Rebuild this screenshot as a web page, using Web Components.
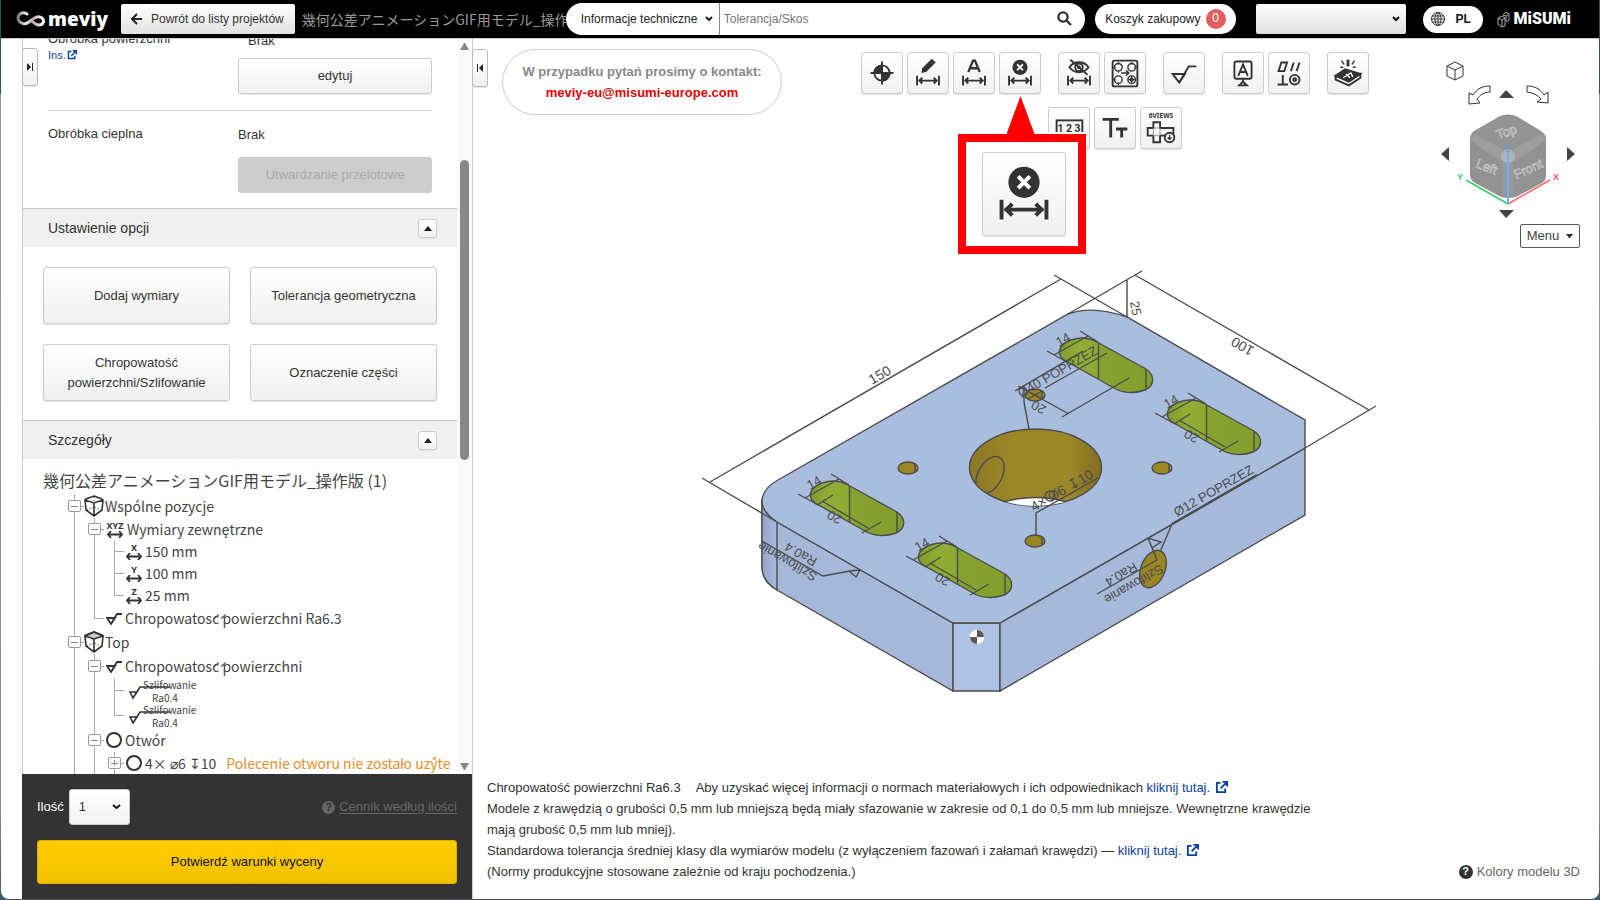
<!DOCTYPE html>
<html lang="pl">
<head>
<meta charset="utf-8">
<title>meviy</title>
<style>
html,body{height:100%}
body{margin:0;box-sizing:border-box;padding:0 1px 1px;background:linear-gradient(#2d5360 94px,#9a9a9e 94px,#8b8b95 90%,#3f5a66);font:13px/20px "Liberation Sans","Noto Sans CJK JP",sans-serif;color:#333;overflow:hidden}
</style>
</head>
<body>
<meviy-app></meviy-app>
<script>
const base = `*{box-sizing:border-box}button,input,select{font:inherit;color:inherit;margin:0}
.btn{border:1px solid #ccc;border-radius:3px;background:linear-gradient(#fff,#f0f0f0);box-shadow:0 1px 1px #e4e4e4;padding:0;cursor:pointer}a{color:#0b3fa8;text-decoration:none}svg{display:block;flex:none}`;
function define(name, css, html) {
  const t = document.createElement('template');
  t.innerHTML = `<style>${base}${css}</style>${html}`;
  customElements.define(name, class extends HTMLElement {
    constructor() { super(); this.attachShadow({mode: 'open'}).append(t.content.cloneNode(true)); }
  });
}
const arrows = (y) => `<path d="M9.5 ${y-5}v10M32.5 ${y-5}v10M11 ${y}h20M15 ${y-3}l-3 3 3 3M27 ${y-3}l3 3-3 3" fill="none" stroke="#333" stroke-width="2"/>`;
const deleteIcon = `<svg viewBox="0 0 42 42"><circle cx="21" cy="15" r="8" fill="#333"/><path d="M18 12l6 6M24 12l-6 6" stroke="#fff" stroke-width="2"/>${arrows(29)}</svg>`;
const ext = (s) => `<svg width="${s}" height="${s}" viewBox="0 0 14 14" fill="none" stroke="#0b3fa8" stroke-width="2"><path d="M6 2H2v10h9V8M8 1h5v5M13 1L6 8"/></svg>`;

/* ---------- header ---------- */
define('meviy-logo', `:host{display:flex;align-items:center;gap:2px;width:91px;flex:none;color:#fff;font:800 19px/36px "Open Sans",sans-serif}`,
`<svg width="30" height="16" viewBox="0 0 30 16" fill="none" stroke-linecap="round"><defs><linearGradient id="m"><stop stop-color="#777"/><stop offset=".3" stop-color="#eee"/><stop offset=".6" stop-color="#b8aeb4"/><stop offset="1" stop-color="#fff"/></linearGradient></defs><path d="M11 3C7 0 2 3 2 7s6 8 11 4 9-7 13-4c3 3 1 7-3 7-2 0-4-1-6-3" stroke="url(#m)" stroke-width="3"/></svg><span>meviy</span>`);
define('misumi-logo', `:host{display:flex;align-items:center;gap:4px;color:#fff;font:900 16px/36px Roboto,sans-serif}`,
`<svg width="13" height="17" viewBox="0 0 13 17" fill="none" stroke="#aaa"><path d="M1 7l4-2 3 2v8l-3 1-4-3zM1 7l4 2 3-2M5 9v7M6 4l3-3 3 2v6l-3 2M6 4l3 1 3-2M9 5v5"/></svg><span>MiSUMi</span>`);
define('app-header', `:host{display:flex;align-items:center;height:38px;background:#000;padding:0 28px 0 15px;font-size:12px}
.back{display:flex;align-items:center;gap:9px;height:30px;margin-left:14px;padding:0 11px 0 10px;white-space:nowrap;border:0;border-radius:2px;background:linear-gradient(#fff,#e2e2e2);box-shadow:none;color:#333}
.name{font:14px/20px "Noto Sans CJK JP",sans-serif;color:#999;width:264px;margin-left:7px;padding-bottom:1px;overflow:hidden;white-space:nowrap;flex:none}
form{display:flex;height:32px;flex:1 1 520px;min-width:300px;background:#fff;border-radius:16px;overflow:hidden}
form>*{border:0;background:transparent}
.sel{position:relative;display:flex;flex:none}
select{appearance:none;border:0;background:transparent;outline:0;width:100%}
.sel svg{position:absolute;right:6px;top:calc(50% - 4px);pointer-events:none}
.kind{width:154px;border-right:1px solid #888}.kind select{padding:0 0 0 15px;color:#222}
input{flex:1;min-width:0;padding:0 4px;outline:0}input::placeholder{color:#757575;opacity:1}
.find{width:42px;padding:0 0 2px;display:grid;place-items:center}
.cart{display:flex;align-items:center;gap:5px;height:30px;margin-left:10px;padding:0 10px;border:0;border-radius:15px;background:#fff;white-space:nowrap;color:#222}
.cart b{width:20px;height:20px;border-radius:10px;background:#e05e5e;color:#fff;font-weight:400;line-height:19px}
.user{width:150px;height:30px;margin-left:20px;border-radius:2px;background:linear-gradient(#fff,#dedede)}
.lang{display:flex;align-items:center;gap:11px;height:27px;width:60px;flex:none;margin:0 14px 0 17px;padding:0 8px;border:0;border-radius:14px;background:#fff;color:#111;font-weight:700}`,
`<meviy-logo></meviy-logo>
<button class="btn back"><svg width="11" height="12" viewBox="0 0 11 12" fill="none" stroke="#222" stroke-width="2"><path d="M11 6H2M6 1L1 6l5 5"/></svg>Powrót do listy projektów</button>
<div class="name">幾何公差アニメーションGIF用モデル_操作版</div>
<form><div class="sel kind"><select aria-label="Rodzaj"><option>Informacje techniczne</option></select><svg width="8" height="8" viewBox="0 0 8 8" fill="none" stroke="#222" stroke-width="2"><path d="M1 2l3 3 3-3"/></svg></div>
<input aria-label="Szukaj" placeholder="Tolerancja/Skos"><button type="button" class="find" aria-label="Szukaj"><svg width="15" height="15" viewBox="0 0 15 15" fill="none" stroke="#333" stroke-width="2.4"><circle cx="6" cy="6" r="4.6"/><path d="M9.5 9.5L14 14"/></svg></button></form>
<button class="cart">Koszyk zakupowy <b>0</b></button>
<div class="sel user"><select aria-label="Konto"><option></option></select><svg width="8" height="8" viewBox="0 0 8 8" fill="none" stroke="#111" stroke-width="2"><path d="M1 2l3 3 3-3"/></svg></div>
<button class="lang"><svg width="14" height="14" viewBox="0 0 14 14" fill="none" stroke="#333"><circle cx="7" cy="7" r="6.5"/><ellipse cx="7" cy="7" rx="3" ry="6.5"/><path d="M7 0v14M0 7h14M1 4h12M1 10h12"/></svg>PL</button>
<misumi-logo></misumi-logo>`);

/* ---------- left panel ---------- */
define('section-head', `:host{display:flex;align-items:center;justify-content:space-between;height:39px;padding:0 20px 0 25px;border-top:1px solid #ccc;background:#f0f0f0;font-size:14px}
button{width:19px;height:19px;display:grid;place-items:center}`,
`<slot></slot><button class="btn" aria-label="Zwiń"><svg width="8" height="5"><path d="M0 5l4-5 4 5z" fill="#222"/></svg></button>`);

define('form-row', `:host{display:grid;grid-template-columns:190px 194px;padding:0 25px}`, `<slot></slot>`);

define('option-grid', `:host{display:grid;grid-template-columns:1fr 1fr;gap:20px;padding:20px 20px 19px}
button{height:57px;padding-bottom:2px}`,
`<button class="btn">Dodaj wymiary</button><button class="btn">Tolerancja geometryczna</button><button class="btn">Chropowatość<br>powierzchni/Szlifowanie</button><button class="btn">Oznaczenie części</button>`);

/* Each row carries a "guides" code, one letter per 20px column:
   v line, f box with line, p plus box, t branch, l last branch */
const treeIcons = {
  cube: `<svg width="20" height="22" viewBox="0 0 20 22" fill="none" stroke="#333" stroke-width="1.6"><path d="M10 1l8 3 1 1-1 10-8 6-8-6L1 5l1-1zM1 5l9 3 9-3M10 8v13"/><path d="M10 2v6M3 15l7-3 7 3" stroke-dasharray="1 2" stroke-width="1"/></svg>`,
  top: `<svg width="20" height="22" viewBox="0 0 20 22" fill="none" stroke="#333" stroke-width="1.6"><path d="M10 1l9 4-9 3-9-3z" fill="#ccc"/><path d="M10 1l8 3 1 1-1 10-8 6-8-6L1 5l1-1zM10 8v13"/><path d="M3 15l7-3 7 3" stroke-dasharray="1 2" stroke-width="1"/></svg>`,
  rough: `<svg width="16" height="14" viewBox="0 0 16 14" fill="none" stroke="#333" stroke-width="1.8"><path d="M1 7h8l-4 6zM5 13L11 3h5"/></svg>`,
  circle: `<svg width="16" height="16" viewBox="0 0 16 16" fill="none" stroke="#333" stroke-width="2"><circle cx="8" cy="8" r="7"/></svg>`
};
const dim = (t) => `<span class="dim ${t.length > 1 ? 'wide' : ''}"><b>${t}</b><svg width="16" height="7" viewBox="0 0 16 7" fill="none" stroke="#333" stroke-width="1.8"><path d="M1 3.5h14M4 0L1 3.5 4 7M12 0l3 3.5L12 7"/></svg></span>`;
const grind = `<span class="grind"><svg width="42" height="14" viewBox="0 0 42 14" fill="none" stroke="#333" stroke-width="1.6"><path d="M1 6h7l-4 6zM4 12L11 1h30"/></svg><span class="up">Szlifowanie</span><span class="dn">Ra0.4</span></span>`;
const rows = [
  ['f', 24, treeIcons.cube, 'Wspólne pozycje', 1], ['vf', 22, dim('XYZ'), 'Wymiary zewnętrzne', 2],
  ['vvt', 22, dim('X'), '150 mm', 3], ['vvt', 22, dim('Y'), '100 mm', 3], ['vvl', 22, dim('Z'), '25 mm', 3],
  ['vl', 24, treeIcons.rough, 'Chropowatość powierzchni Ra6.3', 2],
  ['f', 24, treeIcons.top, 'Top', 1], ['vf', 24, treeIcons.rough, 'Chropowatość powierzchni', 2],
  ['vvt', 25, grind, '', 3], ['vvl', 25, grind, '', 3],
  ['vf', 24, treeIcons.circle, 'Otwór', 2], ['vvp', 22, treeIcons.circle, '4× ⌀6 ↧10<em>Polecenie otworu nie zostało użyte</em>', 3]
];
define('detail-tree', `:host{display:block;padding:0 0 0 41px;font:14px/22px "Noto Sans CJK JP",sans-serif;white-space:nowrap;color:#444}
ul{margin:0;padding:0;list-style:none}li{display:flex;align-items:center}
i{position:relative;width:20px;height:100%;flex:none;background:linear-gradient(#aaa,#aaa) 10px 0/1px 100% no-repeat}
i.t,i.f,i.p{background:linear-gradient(#aaa,#aaa) 10px 0/1px 100% no-repeat,linear-gradient(#aaa,#aaa) 10px 50%/10px 1px no-repeat}
i.l{background:linear-gradient(#aaa,#aaa) 10px 0/1px 50% no-repeat,linear-gradient(#aaa,#aaa) 10px 50%/10px 1px no-repeat}
i button{position:absolute;left:4px;top:calc(50% - 6px);width:13px;height:12px;padding:0;border:1px solid #999;border-radius:2px;background:linear-gradient(#888,#888) center/7px 1px no-repeat #fff}
i.p button{background:linear-gradient(#888,#888) center/7px 1px no-repeat,linear-gradient(#888,#888) center/1px 6px no-repeat #fff}
.ic{display:flex;align-items:center;justify-content:center;min-width:20px}
.n2,.n3{padding-left:2px}.n2 .ic,.n3 .ic{min-width:16px;margin-right:3px}
.n2,.n3,.n1{display:flex;align-items:center}.n1{gap:1px}
.dim{display:flex;flex-direction:column;align-items:center}.dim.wide{width:18px}.dim b{font:700 9px/10px "Noto Sans",sans-serif;color:#333}
em{font-style:normal;color:#e58f2a;margin-left:10px}
.grind{position:relative;display:block;width:68px;height:25px;font-size:10px;line-height:12px}
.grind svg{position:absolute;left:3px;top:8px}.up{position:absolute;left:17px;top:1px}.dn{position:absolute;left:26px;top:14px}`,
`<ul>${rows.map(([g, h, ic, t, n]) => `<li style="height:${h}px">${[...g].map(c => `<i class="${c}">${'fp'.includes(c) ? `<button aria-label="${c === 'p' ? 'Rozwiń' : 'Zwiń'}"></button>` : ''}</i>`).join('')}<span class="n${n}"><span class="ic">${ic}</span><span>${t}</span></span></li>`).join('')}</ul>`);

define('quote-footer', `:host{display:block;background:#333;color:#fff;height:125px;margin-left:-1px;padding:15px 15px 14px}
.r{display:flex;align-items:center;height:36px;gap:5px;margin-bottom:15px}
.s{position:relative}.s svg{position:absolute;right:9px;top:14px;pointer-events:none}
select{appearance:none;width:61px;height:36px;border:1px solid #ccc;border-radius:3px;background:linear-gradient(#fff,#f2f2f2);color:#333;padding:0 9px}
a{display:flex;align-items:center;gap:4px;margin-left:auto;color:#666}u{text-underline-offset:2px}
.go{width:100%;height:44px;border:1px solid #d8ad00;border-radius:3px;background:linear-gradient(#fc0,#f2c200);color:#111}`,
`<div class="r"><label for="q">Ilość</label><span class="s"><select id="q"><option>1</option></select><svg width="9" height="8" viewBox="0 0 9 8" fill="none" stroke="#111" stroke-width="2"><path d="M1 2l3.5 3L8 2"/></svg></span>
<a href="#"><help-dot style="--c:#666;--t:#333"></help-dot><u>Cennik według ilości</u></a></div><button class="go">Potwierdź warunki wyceny</button>`);
define('help-dot', `:host{display:grid;place-items:center;width:13px;height:13px;border-radius:50%;background:var(--c,#333);color:var(--t,#fff);font:700 11px/13px "Liberation Sans",sans-serif}`, `?`);

define('side-panel', `:host{display:flex;flex-direction:column;width:451px;flex:none;margin-left:21px;border-left:1px solid #ccc;border-right:1px solid #ccc;position:relative}
.scroll{flex:1;display:flex;overflow:hidden;min-height:0}
.body{flex:1;min-width:0;overflow:hidden}
.bar{width:15px;flex:none;background:#fafafa;display:flex;flex-direction:column;align-items:center;padding:4px 0}
.bar span{width:9px;height:300px;margin:110px 0 auto;border-radius:5px;background:#888}
.tab{position:absolute;left:-1px;top:9px;width:16px;height:38px;display:grid;place-items:center;border-color:#bbb}
.wide{height:36px;width:194px;display:block}
.wide:disabled{background:#ccc;border-color:#ccc;color:#aaa;box-shadow:none}
.a{height:71px}
.a p,.b p{margin:0}.ins{font-size:11px;line-height:12px;display:flex;align-items:center;gap:1px}
hr{border:0;border-top:1px solid #ccc;margin:0 25px}
.b{height:97px;padding-top:13px}
h2{font:16px/24px "Noto Sans CJK JP",sans-serif;margin:9px 0 2px 20px;color:#444;white-space:nowrap}`,
`<div class="scroll"><div class="body">
<form-row class="a"><div><p style="margin-top:-10px">Obróbka powierzchni</p><a class="ins" href="#">Ins.${ext(10)}</a></div><div><p style="margin:-8px 0 7px 10px">Brak</p><button class="btn wide">edytuj</button></div></form-row>
<hr>
<form-row class="b"><p>Obróbka cieplna</p><div><p style="margin:1px 0 12px">Brak</p><button class="btn wide" disabled>Utwardzanie przelotowe</button></div></form-row>
<section-head>Ustawienie opcji</section-head>
<option-grid></option-grid>
<section-head>Szczegóły</section-head>
<h2>幾何公差アニメーションGIF用モデル_操作版 (1)</h2>
<detail-tree></detail-tree>
</div><div class="bar"><svg width="9" height="7"><path d="M0 7l4-7h1l4 7z" fill="#888"/></svg><span></span><svg width="9" height="7"><path d="M0 0h9L5 7H4z" fill="#888"/></svg></div></div>
<quote-footer></quote-footer>
<button class="btn tab" aria-label="Rozwiń panel"><svg width="8" height="8"><path d="M1 0l4 4-4 4zM6 0h1v8H6z" fill="#222"/></svg></button>`);

/* ---------- viewer ---------- */
define('tool-button', `:host{display:block;width:42px;height:42px}button{width:100%;height:100%;display:block}::slotted(svg){display:block;width:100%;height:100%}`, `<button class="btn"><slot></slot></button>`);
const ic = (s) => `<tool-button><svg viewBox="0 0 42 42" fill="none" stroke="#333" stroke-width="2">${s}</svg></tool-button>`;
define('tool-bar', `:host{display:block;position:relative}
.row{display:flex;justify-content:center;gap:4px;margin-bottom:13px}.g{display:flex;gap:4px;margin-right:13px}.g:last-child{margin-right:0}`,
`<div class="row"><div class="g">
${ic('<circle cx="21" cy="21" r="8"/><path d="M21 21V13A8 8 0 0 0 13 21ZM21 21V29A8 8 0 0 0 29 21Z" fill="#333"/><path d="M21 9v24M9 21h24"/>')}
${ic(`<path d="M14 21l1-5 8-8 4 4-8 8z" fill="#333" stroke="none"/><path d="M24 7l4 4" stroke-width="3"/>${arrows(29)}`)}
${ic(`<path d="M15 20l5-12h2l5 12M17 16h8" stroke-width="2.4"/>${arrows(29)}`)}
<tool-button>${deleteIcon}</tool-button></div><div class="g">
${ic(`<path d="M11 15c5-7 15-7 20 0-5 7-15 7-20 0zM12 7l18 16"/><circle cx="21" cy="15" r="4"/><circle cx="21" cy="15" r="1"/>${arrows(29)}`)}
${ic('<rect x="8" y="8" width="26" height="27" rx="2"/><g stroke-width="1.5"><circle cx="14" cy="15" r="4"/><circle cx="28" cy="15" r="4"/><circle cx="14" cy="28" r="4"/><circle cx="28" cy="28" r="4"/><circle cx="28" cy="28" r="1.5"/><path d="M17 21h8M22 18l3 3-3 3"/><path d="M14 9v3M14 18v3M28 9v3M8 15h3M31 15h3M14 31v3M8 28h3M28 24v8M24 28h8" stroke-width="1"/></g>')}
</div><div class="g">${ic('<path d="M9 22h13l-6 9zM16 31l10-17h8"/>')}</div><div class="g">
${ic('<rect x="12" y="9" width="18" height="18" rx="2"/><path d="M16 24l5-12 5 12M18 20h6M21 27v5M17 34l4-4 4 4z"/>')}
${ic('<path d="M10 19l3-9h6l-3 9zM23 19l3-9M29 19l3-9M9 33h11M14.5 23v10"/><circle cx="27" cy="28" r="5"/><circle cx="27" cy="28" r="1.5"/>')}
</div><div class="g">${ic('<path d="M8 24l10-7 16 5-11 8z" fill="#333"/><path d="M8 24v4l14 6 12-8v-4l-12 8z" fill="#fff"/><path d="M16 26l8-5 2 4M19 22l4 4" stroke="#fff" stroke-width="1.5"/><path d="M21 7v7" stroke-width="3"/><path d="M14 8l3 4M28 8l-3 4M13 15h3M26 15h3" stroke-width="1.5"/>')}</div></div>
<div class="row">
${ic('<rect x="8" y="13" width="27" height="18"/><text x="21" y="25" text-anchor="middle" font-family="Roboto" font-weight="700" font-size="11" fill="#333" stroke="none">1 2 3</text>')}
${ic('<path d="M8 12h17M16.5 12v19" stroke-width="3"/><path d="M22 22h12M28 22v9" stroke-width="3"/>')}
${ic('<text x="21" y="11" text-anchor="middle" font-family="Noto Sans" font-weight="700" font-size="7" fill="#333" stroke="none">6VIEWS</text><path d="M13 15h7v6h14v8h-14v7h-7v-7H7v-8h6z"/><path d="M13 21h7v8h-7z" stroke-width="1" stroke="#999"/><circle cx="30" cy="31" r="5" fill="#fff"/><path d="M30 28v5M28 31l2 2 2-2" stroke-width="1.5"/>')}
</div><slot></slot>`);
define('tool-callout', `:host{position:absolute;left:calc(50% - 157px);top:44px;width:128px}
.tip{width:28px;height:38px;margin-left:49px;background:red;clip-path:polygon(50% 0,100% 100%,0 100%)}
.box{height:120px;border:8px solid red;background:#fff;display:grid;place-items:center;padding-left:4px;box-shadow:0 -2px #fff}
.tip{position:relative;z-index:1}
tool-button{width:84px;height:84px}`,
`<div class="tip"></div><div class="box"><tool-button>${deleteIcon}</tool-button></div>`);

define('contact-note', `:host{display:block;height:66px;width:280px;flex:none;border:1px solid #ccc;border-radius:33px;text-align:center;font-weight:700;color:#888;line-height:21px;padding:11px 0}a{color:#e60000}`,
`<div>W przypadku pytań prosimy o kontakt:</div><a href="mailto:meviy-eu@misumi-europe.com">meviy-eu@misumi-europe.com</a>`);

define('view-cube', `:host{display:flex;flex-direction:column;align-items:flex-end;width:144px;flex:none}
button{height:24px;width:60px;margin-top:2px;border:1px solid #555;border-radius:2px;background:#fff;color:#444;padding:0;display:flex;align-items:center;justify-content:center;gap:7px}`,
`<svg width="144" height="164" viewBox="1436 58 144 164" fill="none" stroke="#333">
<path d="M1447 66l8-4 8 4v10l-8 4-8-4zM1447 66l8 4 8-4M1455 70v10"/>
<path d="M1490 86c-8 0-13 3-17 9l-4-2v11l11-1-3-4c3-4 7-7 13-7zM1527 86c8 0 13 3 17 9l4-3v11l-11-1 4-3c-3-4-8-6-14-7z"/>
<path d="M1499 98l7-8 8 8zM1499 210h15l-8 8zM1449 147v14l-8-7zM1567 147v14l8-7z" fill="#444" stroke="none"/>
<path d="M1500 116q8-3 16 0l25 15q5 3 5 8v36q0 6-4 8l-26 14q-8 2-15 0l-26-14q-5-3-5-8v-36q0-5 4-8z" fill="#929292" stroke="none"/>
<path d="M1475 134l27-17h12l27 17-27 15h-12z" fill="#949494" stroke="none"/>
<path d="M1470 140l5-6 27 15 6 8 6-8 27-15 5 6-30 21h-16z" fill="#9e9e9e" stroke="none"/><path d="M1502 160h12v37h-12z" fill="#989898" stroke="none"/>
<circle cx="1508" cy="156" r="7" fill="#b4b4b4" stroke="none"/>
<g font-family="Liberation Sans" font-size="13" fill="#8e8e8e" stroke="#d0d0d0" stroke-width=".6" text-anchor="middle"><text transform="translate(1508 136) rotate(-20)">Top</text><text transform="translate(1485 171) rotate(22)">Left</text><text transform="translate(1530 173) rotate(-24)">Front</text></g>
<path d="M1466 180l42 24" stroke="#3c6" stroke-width="1.5"/><path d="M1550 180l-42 24" stroke="#f66" stroke-width="1.5"/><path d="M1508 204v-52" stroke="#6ab0f5" stroke-width="2"/>
<g font-family="Liberation Sans" font-size="9" font-weight="700" stroke="none" text-anchor="middle"><text x="1460" y="180" fill="#3c6">Y</text><text x="1556" y="180" fill="#f55">X</text><text x="1508" y="152" fill="#5aa5f0">Z</text></g>
</svg><button>Menu <svg width="7" height="4"><path d="M0 0h7L4 4H3z" fill="#333"/></svg></button>`);

const slotShape = (dx, dy, full) => `<g transform="translate(${dx} ${dy})"><path d="M848 485L897 512C907 519 905 529 896 533C885 537 873 536 865 531L815 503C806 496 811 487 822 483C831 480 841 481 848 485Z" fill="url(#sg)"/><path d="M849.5 486V522M897 512v20M798 494l20 11M831 474l18 11M805 498l34-19"/>${full ? '<path d="M817 505l16-10M822 501l46 27M862 533l19-11"/>' : ''}</g>`;
const slotText = (dx, dy, full) => `<text transform="translate(${810+dx} ${490+dy}) rotate(-30)">14</text>${full ? `<text transform="translate(${843+dx} ${517+dy}) rotate(210)">20</text>` : ''}`;
const slots = [[0,0,1],[108,62,1],[249,-143,0],[357,-81,1]];
const hole = (x, y) => `<ellipse cx="${x}" cy="${y}" rx="10" ry="6" fill="#9a8623"/><path d="M${x+7} ${y-4}v8"/>`;
define('part-model', `:host{display:block}svg{margin:0 auto;max-width:100%}`,
`<svg width="720" height="440" viewBox="676 260 720 440" fill="none" stroke="#4c4c4c" stroke-width="1.4" role="img" aria-label="Model 3D">
<defs><linearGradient id="sg"><stop offset="0" stop-color="#7f9a2b"/><stop offset=".2" stop-color="#91ad35"/><stop offset=".42" stop-color="#8caa32"/><stop offset=".43" stop-color="#88a230"/><stop offset="1" stop-color="#829f2c"/></linearGradient>
<linearGradient id="hg"><stop offset="0" stop-color="#8c7826"/><stop offset=".3" stop-color="#9b8627"/><stop offset=".75" stop-color="#9d8827"/><stop offset="1" stop-color="#836d22"/></linearGradient>
<linearGradient id="cg"><stop stop-color="#94a7cc"/><stop offset="1" stop-color="#a6b9dc"/></linearGradient>
<clipPath id="hc"><ellipse cx="1035.5" cy="467.5" rx="66" ry="38.5"/></clipPath></defs>
<path d="M762 500V567Q762 581 777 590L953 691V623L777 522z" fill="#a5b8da"/><path d="M762 500V567Q762 581 777 590V522Q762 512 762 500z" fill="url(#cg)"/>
<path d="M953 623h47v68h-47z" fill="#aec2e6"/><path d="M1000 623L1305 448V515L1000 691z" fill="#a6b9db"/>
<path d="M777 522Q762 512 762 501Q763 488 778 480L1068 314Q1092 305 1127 317L1305 420V448L1000 623H953z" fill="#a9bedf"/>
${slots.map(a => slotShape(...a)).join('')}
<ellipse cx="1035.5" cy="467.5" rx="66" ry="38.5" fill="url(#hg)"/><g clip-path="url(#hc)"><ellipse cx="1035.5" cy="536" rx="66" ry="38.5" fill="#fff"/><ellipse cx="990" cy="475" rx="12" ry="20" transform="rotate(28 990 475)"/><circle cx="1050" cy="496" r="5"/></g>
${hole(908,468)}${hole(1035,541)}${hole(1035,395)}${hole(1162,468)}
<ellipse cx="1153" cy="569" rx="12" ry="19.5" transform="rotate(22 1153 569)" fill="#9a8623"/>
<path d="M710 482L1061 279M702 478L777 522M1054 275L1127 317M1135 275L1369 410M1142 271L1068 314M1376 406L1305 448M1127 280v37"/>
<path d="M1172 524l85-49" stroke-width="2.2"/><path d="M1172 524l-12 28M1097 594l60-34-9-22 13 4-9 6M762 541l61 35 27-5 10-1-4 7-7-6"/>
<path d="M1015 391l68-40M1045 388l62-35M1062 417l67-39M1018 386l51 28M1024 402l5 27M1024 402v-14M1028 391l14 8M1042 391l-14 8M1036 535v-22l62-35"/>
<g fill="#4c4c4c" stroke="none" font-family="Liberation Sans" font-size="13">
${slots.map(a => slotText(...a)).join('')}<text transform="translate(1047 407) rotate(210)">20</text>
<text font-size="14" transform="translate(872 385) rotate(-30)">150</text><text font-size="14" transform="translate(1255 348) rotate(210)">100</text><text transform="translate(1130 302) rotate(80)">25</text>
<text transform="translate(1021 398) rotate(-30)">Ø40 POPRZEZ</text><text transform="translate(1177 517) rotate(-30)">Ø12 POPRZEZ</text><text transform="translate(1034 512) rotate(-30)" font-size="14">4× Ø6 ↧10</text>
<text transform="translate(1160 564) rotate(150)">Szlifowanie</text><text transform="translate(1134 562) rotate(150)">Ra0.4</text>
<text transform="translate(818 574) rotate(210)">Szlifowanie</text><text transform="translate(818 559) rotate(210)">Ra0.4</text></g>
<circle cx="977" cy="637" r="7" fill="#fff" stroke="none"/><path d="M977 637h-7a7 7 0 0 1 7-7zM977 637h7a7 7 0 0 1-7 7z" fill="#fff" stroke="none"/><path d="M977 637v-7a7 7 0 0 0-7 7zM977 637v7a7 7 0 0 0 7-7z" fill="#fff" stroke="none"/><path d="M977 637v-7a7 7 0 0 1 7 7zM977 637v7a7 7 0 0 1-7-7z" fill="#555" stroke="none"/>
</svg>`);

define('info-notes', `:host{display:flex;justify-content:space-between;align-items:flex-end;padding:0 19px 17px 14px;line-height:21px}
p{margin:0;max-width:840px}a svg{display:inline-block;vertical-align:-2px;margin-left:5px}
.gap{display:inline-block;width:15px}.k{display:flex;align-items:center;gap:4px;color:#666;white-space:nowrap}help-dot{width:14px;height:14px}`,
`<div><p>Chropowatość powierzchni Ra6.3<span class="gap"></span>Aby uzyskać więcej informacji o normach materiałowych i ich odpowiednikach <a href="#">kliknij tutaj.${ext(13)}</a></p>
<p>Modele z krawędzią o grubości 0,5 mm lub mniejszą będą miały sfazowanie w zakresie od 0,1 do 0,5 mm lub mniejsze. Wewnętrzne krawędzie mają grubość 0,5 mm lub mniej).</p>
<p>Standardowa tolerancja średniej klasy dla wymiarów modelu (z wyłączeniem fazowań i załamań krawędzi) — <a href="#">kliknij tutaj.${ext(13)}</a></p>
<p>(Normy produkcyjne stosowane zależnie od kraju pochodzenia.)</p></div><div class="k"><help-dot></help-dot>Kolory modelu 3D</div>`);

define('model-viewer-pane', `:host{display:flex;flex-direction:column;flex:1;min-width:0;position:relative}
.top{display:flex;height:221px;padding:10px 19px 0 29px;align-items:flex-start}
tool-bar{flex:1;margin:3px 0 0 11px}view-cube{margin-top:9px}
part-model{flex:1}
.tab{position:absolute;left:-1px;top:10px;width:16px;height:38px;display:grid;place-items:center;border-color:#bbb}`,
`<div class="top"><contact-note></contact-note><tool-bar><tool-callout></tool-callout></tool-bar><view-cube></view-cube></div>
<part-model></part-model><info-notes></info-notes>
<button class="btn tab" aria-label="Zwiń panel"><svg width="8" height="8"><path d="M7 0L3 4l4 4zM1 0h1v8H1z" fill="#222"/></svg></button>`);

define('meviy-app', `:host{display:flex;flex-direction:column;height:100%;background:#fff;border-radius:0 0 8px 8px;overflow:hidden}
main{flex:1;display:flex;min-height:0;border-top:1px solid #ccc}`,
`<app-header></app-header><main><side-panel></side-panel><model-viewer-pane></model-viewer-pane></main>`);
</script>
</body>
</html>
